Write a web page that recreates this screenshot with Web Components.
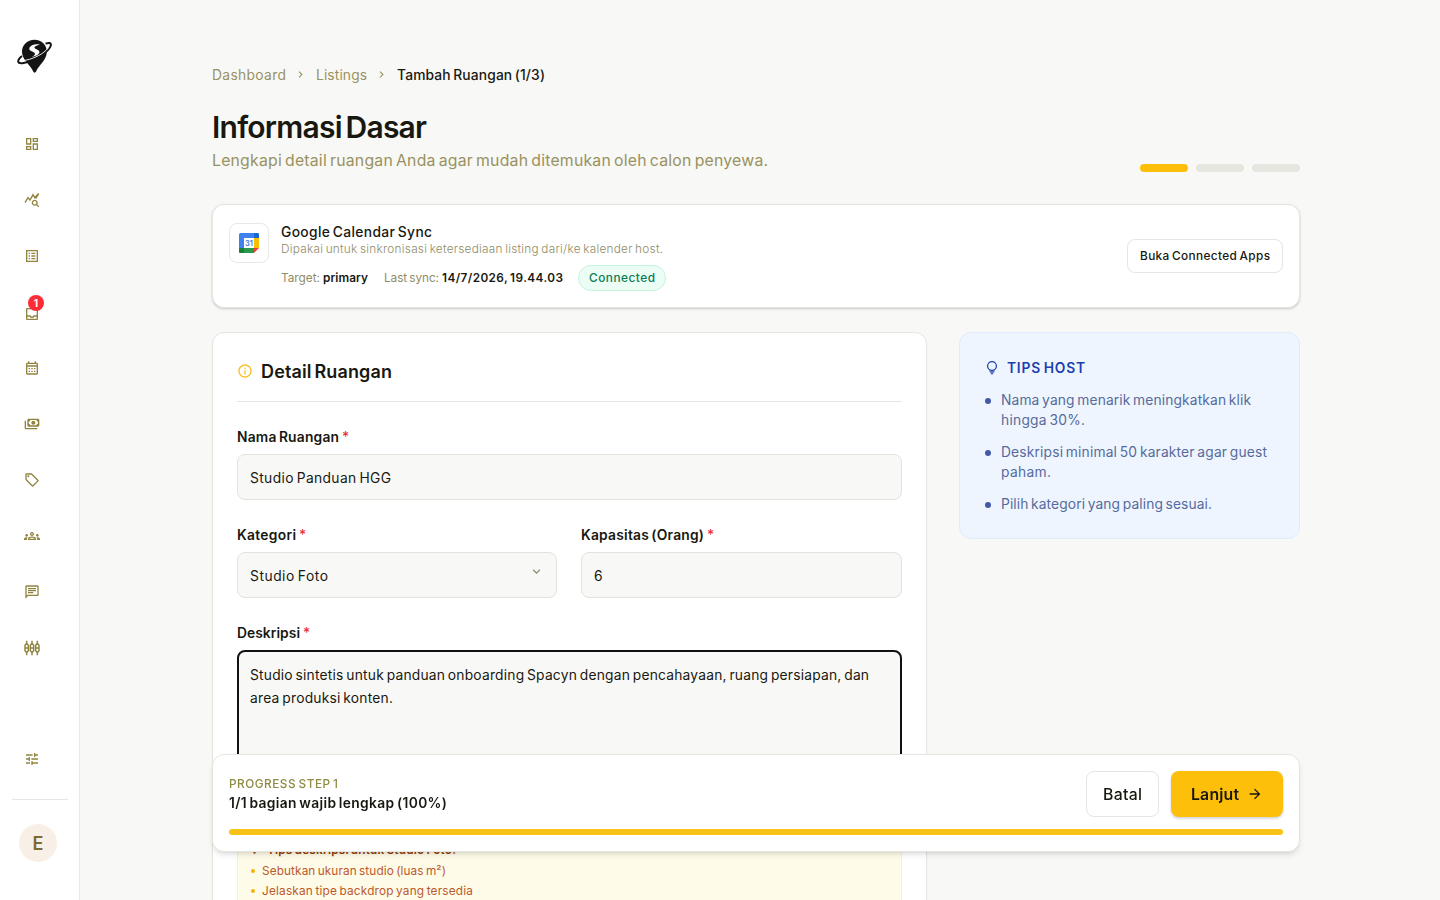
<!DOCTYPE html>
<html lang="id">
<head>
<meta charset="utf-8">
<title>Tambah Ruangan - Informasi Dasar</title>
<style>
html,body{margin:0;height:900px;overflow:hidden;background:#f8f8f6}
body{font-family:Inter,"Open Sans",sans-serif;color:#181811;font-size:13.8px;line-height:20px}
</style>
</head>
<body>
<host-app></host-app>
<script>
const ICONS = {
  dashboard:'<path d="M19 5v2h-4V5h4M9 5v6H5V5h4m10 8v6h-4v-6h4M9 17v2H5v-2h4M21 3h-8v6h8V3zM11 3H3v10h8V3zm10 8h-8v10h8V11zm-10 4H3v6h8v-6z"/>',
  stats:'<path d="M19.88 18.47c.44-.7.7-1.51.7-2.39 0-2.49-2.01-4.5-4.5-4.5s-4.5 2.01-4.5 4.5 2.01 4.5 4.49 4.5c.88 0 1.7-.26 2.39-.7L21.58 23 23 21.58l-3.12-3.11zm-3.8.11c-1.38 0-2.5-1.12-2.5-2.5s1.12-2.5 2.5-2.5 2.5 1.12 2.5 2.5-1.12 2.5-2.5 2.5z"/><path d="M1.500 16 6 8.500l3 3.500 4.500-8 2.500 4.500 6-6.500M17.500 10l4.500-7.500" fill="none" stroke="currentColor" stroke-width="2"/>',
  list:'<path d="M11 7h6v2h-6zm0 4h6v2h-6zm0 4h6v2h-6zM7 7h2v2H7zm0 4h2v2H7zm0 4h2v2H7zM20.1 3H3.9c-.5 0-.9.4-.9.9v16.2c0 .4.4.9.9.9h16.2c.4 0 .9-.5.9-.9V3.9c0-.5-.5-.9-.9-.9zM19 19H5V5h14v14z"/>',
  inbox:'<path d="M19 3H5c-1.1 0-2 .9-2 2v14c0 1.1.9 2 2 2h14c1.1 0 2-.9 2-2V5c0-1.1-.9-2-2-2zm0 16H5v-3h3.56c.69 1.19 1.97 2 3.45 2s2.75-.81 3.45-2H19v3zm0-5h-4.99c0 1.1-.9 2-2 2s-2-.9-2-2H5V5h14v9z"/>',
  calendar:'<path d="M19 4h-1V2h-2v2H8V2H6v2H5c-1.11 0-1.99.9-1.99 2L3 20c0 1.1.89 2 2 2h14c1.1 0 2-.9 2-2V6c0-1.1-.9-2-2-2zm0 16H5V10h14v10zm0-12H5V6h14v2zM9 14H7v-2h2v2zm4 0h-2v-2h2v2zm4 0h-2v-2h2v2zm-8 4H7v-2h2v2zm4 0h-2v-2h2v2zm4 0h-2v-2h2v2z"/>',
  payments:'<path transform="matrix(-1 0 0 1 24 0)" d="M19 14V6c0-1.1-.9-2-2-2H3c-1.1 0-2 .9-2 2v8c0 1.1.9 2 2 2h14c1.1 0 2-.9 2-2zm-2 0H3V6h14v8zm-7-7c-1.66 0-3 1.34-3 3s1.34 3 3 3 3-1.34 3-3-1.34-3-3-3zm13 0v11c0 1.1-.9 2-2 2H4v-2h17V7h2zM3 6h3l-3 3zM17 6h-3l3 3zM3 14h3l-3-3zM17 14h-3l3-3z"/>',
  sell:'<path d="M21.41 11.58l-9-9C12.05 2.22 11.55 2 11 2H4c-1.1 0-2 .9-2 2v7c0 .55.22 1.05.59 1.42l9 9c.36.36.86.58 1.41.58s1.05-.22 1.41-.59l7-7c.37-.36.59-.86.59-1.41s-.23-1.06-.59-1.42zM13 20.01L4 11V4h7v-.01l9 9-7 7.02z"/><circle cx="6.5" cy="6.5" r="1.5"/>',
  groups:'<path d="M4 13c1.1 0 2-.9 2-2s-.9-2-2-2-2 .9-2 2 .9 2 2 2zm1.13 1.1C4.76 14.04 4.39 14 4 14c-.99 0-1.93.21-2.78.58C.48 14.9 0 15.62 0 16.43V18h4.5v-1.61c0-.83.23-1.61.63-2.29zM20 13c1.1 0 2-.9 2-2s-.9-2-2-2-2 .9-2 2 .9 2 2 2zm4 3.43c0-.81-.48-1.53-1.22-1.85C21.93 14.21 20.99 14 20 14c-.39 0-.76.04-1.13.1.4.68.63 1.46.63 2.29V18H24v-1.57zM16.24 13.65c-1.17-.52-2.61-.9-4.24-.9-1.63 0-3.07.39-4.24.9C6.68 14.13 6 15.21 6 16.39V18h12v-1.61c0-1.18-.68-2.26-1.76-2.74zM8.07 16c.09-.23.13-.39.91-.69.97-.38 1.99-.56 3.02-.56s2.05.18 3.02.56c.77.3.81.46.91.69H8.07zM12 8c.55 0 1 .45 1 1s-.45 1-1 1-1-.45-1-1 .45-1 1-1m0-2c-1.66 0-3 1.34-3 3s1.34 3 3 3 3-1.34 3-3-1.34-3-3-3z"/>',
  chat:'<path d="M4 4h16v12H5.17L4 17.17V4m0-2c-1.1 0-1.99.9-1.99 2L2 22l4-4h14c1.1 0 2-.9 2-2V4c0-1.1-.9-2-2-2H4zm2 10h8v2H6v-2zm0-3h12v2H6V9zm0-3h12v2H6V6z"/>',
  candles:'<g fill="none" stroke="currentColor" stroke-width="2.200"><path d="M4 1v4M4 19v4M12 1v4M12 19v4M20 1v4M20 19v4M4 5 1.5 8v8L4 19l2.500-3V8zM12 5 9.500 8v8l2.500 3 2.500-3V8zM20 5l-2.500 3v8l2.500 3 2.500-3V8zM1.500 12h5M9.500 12h5M17.500 12h5"/></g>',
  tune:'<path d="M3 17v2h6v-2H3zM3 5v2h10V5H3zm10 16v-2h8v-2h-8v-2h-2v6h2zM7 9v2H3v2h4v2h2V9H7zm14 4v-2H11v2h10zm-6-4h2V7h4V5h-4V3h-2v6z"/>',
  info:'<path d="M11 7h2v2h-2zm0 4h2v6h-2zm1-9C6.480 2 2 6.480 2 12s4.480 10 10 10 10-4.480 10-10S17.520 2 12 2zm0 18c-4.410 0-8-3.590-8-8s3.590-8 8-8 8 3.590 8 8-3.590 8-8 8z"/>',
  bulb:'<circle cx="12" cy="9" r="6.600" fill="none" stroke="currentColor" stroke-width="1.900"/><path d="M8 15.500h8V18h-1.500v2H14c0 1.200-.9 2-2 2s-2-.8-2-2h-.5v-2H8z" opacity=".7"/>',
  arrow:'<path d="M12 4l-1.410 1.410L16.170 11H4v2h12.170l-5.580 5.590L12 20l8-8z"/>',
  down:'<path d="M16.590 8.590 12 13.170 7.410 8.590 6 10l6 6 6-6z"/>',
  right:'<path d="M10 6 8.590 7.410 13.170 12l-4.580 4.590L10 18l6-6z"/>'
};
class UiIcon extends HTMLElement{
  connectedCallback(){
    const s=this.getAttribute('size')||16;
    this.attachShadow({mode:'open'}).innerHTML=`<style>:host{display:block;flex:none;width:${s}px;height:${s}px}svg{display:block}</style><svg width="${s}" height="${s}" viewBox="0 0 24 24" fill="currentColor">${ICONS[this.getAttribute('name')]}</svg>`;
  }
}
/* A single line of text tracked so that it spans the width in its w attribute. */
class FitText extends HTMLElement{
  constructor(){
    super();
    this.attachShadow({mode:'open'}).innerHTML='<style>:host{display:inline-block;white-space:nowrap;vertical-align:top;word-spacing:-.1em}</style><slot></slot>';
  }
  connectedCallback(){
    const w=+this.getAttribute('w'), n=[...this.textContent].length;
    const natural=this.getBoundingClientRect().width;
    if(n>1)this.style.letterSpacing=((w-natural)/(n-1)).toFixed(3)+'px';
    this.style.width=w+'px';
  }
}
function component(name, html){
  const t=document.createElement('template');
  t.innerHTML=html;
  customElements.define(name, class extends HTMLElement{
    constructor(){
      super();
      this.attachShadow({mode:'open'}).append(t.content.cloneNode(true));
    }
  });
}

component('brand-logo',`<style>:host{display:block;width:36px;height:36px}</style>
<svg width="36" height="36" viewBox="0 0 36 36">
<path d="M17.500 1.800C10.300 1.800 5 7 5 13.800c0 4.200 2.200 7.700 5 11 2.600 3.200 4.600 5.200 6.200 8.800.6 1.500 2.300 1.500 2.900 0 1.400-3.400 3.700-5.700 6.200-9 2.700-3.600 4.500-6.700 4.500-10.800C29.800 7 24.700 1.800 17.500 1.800z" fill="#141414"/>
<path d="M28.500 5.600c3.600-1.200 5.900-.8 5.300 1.800-.9 4-7.600 9.700-16.200 13.700C9.500 25 2 26.700 1.300 23.800c-.4-1.700.8-3.500 3.700-5.800" fill="none" stroke="#141414" stroke-width="2"/>
<path d="M4.200 22.600c4.800.2 11.300-1.800 17.700-5.200 3.700-2 6.600-4.300 9-7" fill="none" stroke="#fff" stroke-width=".9"/>
<path d="M22.800 6.400c-5.200-.4-10.100 1.100-10.500 4.200-.4 2.800 5 3.200 5.600 4.800.4 1.200-1.300 2.600-3.200 3.600 5-.8 8.300-3 7.600-5.400-.6-1.900-4.800-2.500-4.900-4 0-1.400 2.400-2.300 5.400-3.200z" fill="#fff"/>
</svg>`);

component('nav-item',`<style>:host{display:flex;height:56px;width:64px;align-items:center;justify-content:center;color:#918441;position:relative}</style><slot></slot>`);

component('count-badge',`<style>:host{position:absolute;left:28px;top:11px;width:16px;height:16px;border-radius:8px;background:#fb2c36;color:#fff;font-size:10px;font-weight:700;line-height:16px;text-align:center}</style><slot></slot>`);

component('side-bar',`<style>
:host{display:flex;flex-direction:column;box-sizing:border-box;width:80px;height:900px;background:#fff;border-right:1px solid #e8e8e4;padding-top:38px}
brand-logo{margin:0 0 42px 17px}
nav{display:flex;flex-direction:column;flex:1}
.low{margin-top:3px}
.end{border-top:1px solid #e6e6e2;margin:12px 11px 0 12px;padding:24px 0 38px 7px}
.av{width:38px;height:38px;border-radius:50%;background:#f8f0e6;color:#7d6b32;font-size:18px;font-weight:600;line-height:39px;text-align:center}
</style>
<brand-logo></brand-logo>
<nav>
<nav-item><ui-icon name="dashboard"></ui-icon></nav-item>
<nav-item><ui-icon name="stats"></ui-icon></nav-item>
<nav-item><ui-icon name="list"></ui-icon></nav-item>
<nav-item><ui-icon class="low" name="inbox"></ui-icon><count-badge>1</count-badge></nav-item>
<nav-item><ui-icon name="calendar"></ui-icon></nav-item>
<nav-item><ui-icon name="payments"></ui-icon></nav-item>
<nav-item><ui-icon name="sell"></ui-icon></nav-item>
<nav-item><ui-icon name="groups"></ui-icon></nav-item>
<nav-item><ui-icon name="chat"></ui-icon></nav-item>
<nav-item><ui-icon name="candles"></ui-icon></nav-item>
</nav>
<nav-item><ui-icon name="tune"></ui-icon></nav-item>
<div class="end"><div class="av">E</div></div>`);

component('page-header',`<style>
:host{display:block}
.crumbs{display:flex;align-items:center;height:20px;color:#98925f}
.crumbs ui-icon{margin:-2px 9px 0 8px}
b{font-weight:500;color:#181811}
.row{display:flex;justify-content:space-between;align-items:flex-end;margin-top:24px}
h1{margin:0;font-size:30px;font-weight:600;line-height:37px;height:36px}
p{margin:4px 0 0;font-size:15.800px;line-height:24px;color:#98925f;height:23px}
.steps{display:flex;gap:8px}
i{width:48px;height:8px;border-radius:4px;background:#e6e6e1}
i.on{background:#fdbf0a}
</style>
<div class="crumbs"><fit-text w="74">Dashboard</fit-text><ui-icon name="right" size="13"></ui-icon><fit-text w="51">Listings</fit-text><ui-icon name="right" size="13"></ui-icon><b><fit-text w="148">Tambah Ruangan (1/3)</fit-text></b></div>
<div class="row"><div><h1><fit-text w="215">Informasi Dasar</fit-text></h1><p><fit-text w="556">Lengkapi detail ruangan Anda agar mudah ditemukan oleh calon penyewa.</fit-text></p></div><div class="steps"><i class="on"></i><i></i><i></i></div></div>`);

component('gcal-logo',`<style>:host{display:flex;box-sizing:border-box;width:40px;height:40px;border:1px solid #e8e8e4;border-radius:8px;align-items:center;justify-content:center;flex:none}</style>
<svg width="20" height="20" viewBox="0 0 20 20"><path d="M1.500 0H18.500A1.500 1.500 0 0 1 20 1.500V5H5v10H0V1.500A1.500 1.500 0 0 1 1.500 0z" fill="#3f82ee"/><path d="M15 0h3.500A1.500 1.500 0 0 1 20 1.500V5h-5z" fill="#1b66d0"/><path d="M15 5h5v10h-5z" fill="#fbbc04"/><path d="M0 15h15v5H1.500A1.500 1.500 0 0 1 0 18.500z" fill="#28984a"/><path d="M0 15h5v5H1.500A1.500 1.500 0 0 1 0 18.500z" fill="#188038"/><path d="M15 15h5l-5 5z" fill="#ea4335"/><path d="M5 5h10v10H5z" fill="#fff"/><text x="10" y="12.800" font-size="7.500" font-weight="600" text-anchor="middle" fill="#3a7be0" font-family="Inter">31</text></svg>`);

component('sync-card',`<style>
:host{display:flex;box-sizing:border-box;height:104px;border:1px solid #e6e6e1;border-radius:12px;background:#fff;box-shadow:0 1px 3px #0000001a,0 1px 2px #0000001a;padding:18px 16px 0;margin-top:32px}
.t{flex:1;padding-left:12px}
.n{font-weight:500;line-height:18px;height:18px}
.d{font-size:11.800px;line-height:16px;height:16px;color:#8f8c68;font-weight:300}
.m{display:flex;align-items:center;height:26px;margin-top:8px;font-size:11.800px;color:#8f8c68}
.m b{font-weight:600;color:#181811;margin:0 16px 0 3px}
.m b:last-of-type{margin-right:15px}
.pill{box-sizing:border-box;height:26px;width:88px;border:1px solid #c3f3da;background:#ecfdf5;border-radius:13px;color:#0b7c54;font-weight:500;text-align:center;line-height:24px}
.btn{box-sizing:border-box;height:34px;width:156px;margin-top:16px;border:1px solid #e6e6e1;border-radius:8px;font-size:11.800px;font-weight:500;text-align:center;line-height:32px}
</style>
<gcal-logo></gcal-logo>
<div class="t"><div class="n"><fit-text w="151">Google Calendar Sync</fit-text></div><div class="d"><fit-text w="382">Dipakai untuk sinkronisasi ketersediaan listing dari/ke kalender host.</fit-text></div>
<div class="m"><fit-text w="39">Target:</fit-text><b><fit-text w="45">primary</fit-text></b><fit-text w="55">Last sync:</fit-text><b><fit-text w="121">14/7/2026, 19.44.03</fit-text></b><span class="pill"><fit-text w="66">Connected</fit-text></span></div></div>
<div class="btn"><fit-text w="130">Buka Connected Apps</fit-text></div>`);

component('form-field',`<style>
:host{display:block}
.l{display:flex;gap:3px;height:20px;font-weight:600;margin-bottom:7px}
.l em{font-style:normal;color:#e7303b;font-weight:500}
.box{display:flex;align-items:center;justify-content:space-between;box-sizing:border-box;height:46px;border:1px solid #e3e3de;border-radius:8px;background:#f8f8f6;padding:1px 12px 0}
:host([area]) .box{display:block;height:172px;border:2px solid #111;padding:12px 11px;line-height:23px}
</style>
<div class="l"><slot name="label"></slot><em>*</em></div><div class="box"><slot></slot></div>`);

component('tips-inline',`<style>
:host{display:block;box-sizing:border-box;height:110px;margin-top:12px;border:1px solid #fdf3b8;border-radius:8px;background:#fefbe8;padding:5px 12px;font-size:11.800px;line-height:20px;color:#bb5a2a}
.h{display:flex;gap:8px;align-items:center;font-weight:600;color:#973c00;height:20px;margin-bottom:1px}
.i{display:flex;align-items:center;height:20px;gap:7px;padding-left:1px}
.i:before{content:"";width:4px;height:4px;border-radius:2px;background:#f5b30a}
</style>
<div class="h"><ui-icon name="bulb" size="9"></ui-icon><fit-text w="189">Tips deskripsi untuk Studio Foto:</fit-text></div>
<div class="i"><fit-text w="184">Sebutkan ukuran studio (luas m²)</fit-text></div>
<div class="i"><fit-text w="211">Jelaskan tipe backdrop yang tersedia</fit-text></div>`);

component('detail-card',`<style>
:host{display:block;box-sizing:border-box;width:715px;height:640px;border:1px solid #e6e6e1;border-radius:12px;background:#fff;box-shadow:0 1px 2px #0000000d;padding:24px 24px 0}
.h{display:flex;gap:8px;align-items:center;height:28px;padding-bottom:16px;border-bottom:1px solid #e6e6e1;margin-bottom:25px;font-size:18px;font-weight:600}
.h ui-icon{color:#f7c125}
.h fit-text{margin-top:1px}
.two{display:grid;grid-template-columns:320px 321px;gap:24px;margin:25px 0}
.chev{color:#8f8c68;margin:-9px 0 0}
</style>
<div class="h"><ui-icon name="info"></ui-icon><fit-text w="131">Detail Ruangan</fit-text></div>
<form-field><fit-text slot="label" w="102">Nama Ruangan</fit-text><fit-text w="141">Studio Panduan HGG</fit-text></form-field>
<div class="two"><form-field><fit-text slot="label" w="59">Kategori</fit-text><fit-text w="78">Studio Foto</fit-text><ui-icon class="chev" name="down" size="15"></ui-icon></form-field>
<form-field><fit-text slot="label" w="123">Kapasitas (Orang)</fit-text><span>6</span></form-field></div>
<form-field area><fit-text slot="label" w="63">Deskripsi</fit-text><fit-text w="619">Studio sintetis untuk panduan onboarding Spacyn dengan pencahayaan, ruang persiapan, dan</fit-text><fit-text w="143">area produksi konten.</fit-text></form-field>
<tips-inline></tips-inline>`);

component('tips-card',`<style>
:host{display:block;box-sizing:border-box;width:341px;height:207px;border:1px solid #dfecfd;border-radius:12px;background:#eef5ff;padding:25px 24px;color:#566b9c}
.h{display:flex;align-items:center;gap:7px;height:20px;color:#1c3fae;font-weight:600;font-size:13.800px}
.h ui-icon{margin-top:-1px}
ul{list-style:none;margin:12px 0 0;padding:0;display:flex;flex-direction:column;gap:12px}
li{display:flex;gap:9px}
li:before{content:"";width:6px;height:6px;border-radius:3px;background:#4458a6;margin:8px 0 0 1px;flex:none}
li div{display:flex;flex-direction:column;align-items:flex-start;padding-left:1px}
</style>
<div class="h"><ui-icon name="bulb"></ui-icon><fit-text w="78">TIPS HOST</fit-text></div>
<ul><li><div><fit-text w="250">Nama yang menarik meningkatkan klik</fit-text><fit-text w="84">hingga 30%.</fit-text></div></li>
<li><div><fit-text w="266">Deskripsi minimal 50 karakter agar guest</fit-text><fit-text w="50">paham.</fit-text></div></li>
<li><div><fit-text w="211">Pilih kategori yang paling sesuai.</fit-text></div></li></ul>`);

component('progress-bar',`<style>
:host{position:fixed;left:212px;top:754px;box-sizing:border-box;width:1088px;height:98px;border:1px solid #e6e6e1;border-radius:12px;background:#fff;box-shadow:0 4px 6px -1px #0000001a,0 2px 4px -2px #0000001a;padding:16px}
.r{display:flex;height:46px;gap:12px}
.t{flex:1;padding-top:4px}
.k{font-size:11.800px;line-height:18px;height:18px;color:#8f8c44;font-weight:500}
.v{font-weight:600;line-height:20px}
.b{box-sizing:border-box;height:46px;border-radius:8px;display:flex;align-items:center;justify-content:center;font-size:15.800px;font-weight:500}
.b fit-text{margin-top:1px}
.c{width:73px;border:1px solid #e6e6e1}
.n{width:112px;background:#fdbf0a;font-weight:600;gap:8px;box-shadow:0 1px 3px #0000001a,0 2px 3px #0000001a}
.p{height:6px;border-radius:3px;background:#f9c216;margin-top:12px}
</style>
<div class="r"><div class="t"><div class="k"><fit-text w="109">PROGRESS STEP 1</fit-text></div><div class="v"><fit-text w="218">1/1 bagian wajib lengkap (100%)</fit-text></div></div>
<div class="b c"><fit-text w="39">Batal</fit-text></div><div class="b n"><fit-text w="48">Lanjut</fit-text><ui-icon name="arrow"></ui-icon></div></div><div class="p"></div>`);

component('host-app',`<style>
:host{display:flex;height:900px;overflow:hidden}
main{width:1088px;margin-left:132px;padding-top:65px;flex:none}
.cols{display:flex;align-items:flex-start;justify-content:space-between;margin-top:24px}
</style>
<side-bar></side-bar><main><page-header></page-header><sync-card></sync-card><div class="cols"><detail-card></detail-card><tips-card></tips-card></div></main><progress-bar></progress-bar>`);
customElements.define('ui-icon',UiIcon);
customElements.define('fit-text',FitText);
</script>
</body>
</html>
